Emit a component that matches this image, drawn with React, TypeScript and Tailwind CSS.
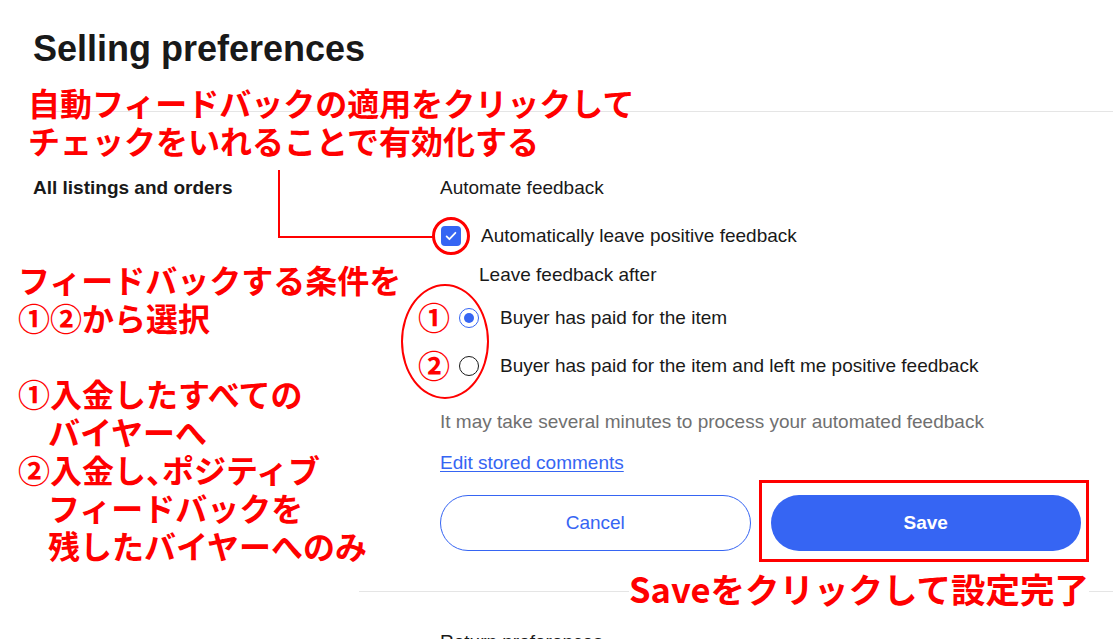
function CheckBox() {
  return (
    <span className="ml-px flex h-5 w-5 shrink-0 items-center justify-center rounded-[4px] bg-[#3665f3]">
      <svg viewBox="0 0 20 20" className="h-4 w-4" fill="none">
        <path d="M4.5 10.5l3.5 3.5 7.5-8" stroke="white" strokeWidth="2.2" strokeLinecap="round" strokeLinejoin="round" />
      </svg>
    </span>
  )
}

function Radio({ checked }: { checked?: boolean }) {
  return (
    <span
      className={
        checked
          ? 'flex h-5 w-5 shrink-0 items-center justify-center rounded-full border-[1.5px] border-[#3665f3]'
          : 'flex h-5 w-5 shrink-0 items-center justify-center rounded-full border-[1.5px] border-[#191919]'
      }
    >
      {checked && <span className="h-[10px] w-[10px] rounded-full bg-[#3665f3]" />}
    </span>
  )
}

const note = "absolute font-['Noto_Sans_CJK_JP',sans-serif] text-[32px] font-bold leading-[38px] text-[#ff0000]"

export default function App() {
  return (
    <div className="relative h-[639px] w-full overflow-hidden bg-white font-['Liberation_Sans',Arial,sans-serif] text-[#191919]">
      <h1 className="pl-[33px] pt-[27px] text-[36px] font-bold leading-[44px]">Selling preferences</h1>
      <div className="ml-[33px] mt-[40px] h-px bg-[#e5e5e5]" />

      <section className="mt-[64px] flex pl-[33px] pr-[32px]">
        <h2 className="w-[407px] shrink-0 text-[19px] font-bold leading-6">All listings and orders</h2>
        <div className="flex-1 text-[19px] leading-6">
          <p>Automate feedback</p>
          <label className="mt-6 flex h-6 items-center gap-5">
            <CheckBox />
            <span>Automatically leave positive feedback</span>
          </label>
          <p className="mt-[15px] pl-[39px]">Leave feedback after</p>
          <label className="mt-[19px] flex h-6 items-center gap-[21px] pl-[19px]">
            <Radio checked />
            <span>Buyer has paid for the item</span>
          </label>
          <label className="mt-6 flex h-6 items-center gap-[21px] pl-[19px]">
            <Radio />
            <span>Buyer has paid for the item and left me positive feedback</span>
          </label>
          <p className="mt-8 text-[#707070]">It may take several minutes to process your automated feedback</p>
          <a href="#" className="mt-[17px] block w-fit text-[#3665f3] underline underline-offset-2">
            Edit stored comments
          </a>
          <div className="mt-5 grid grid-cols-2 gap-5">
            <button
              type="button"
              className="h-14 rounded-full border border-[#3665f3] bg-white text-[19px] text-[#3665f3]"
            >
              Cancel
            </button>
            <button type="button" className="h-14 rounded-full bg-[#3665f3] text-[19px] font-bold text-white">
              Save
            </button>
          </div>
        </div>
      </section>

      <div className="ml-[359px] mt-10 h-px bg-[#e5e5e5]" />
      <p className="ml-[440px] mt-[38px] text-[19px] leading-6">Return preferences</p>

      {/* annotations */}
      <div className={`${note} left-[28px] top-[83px]`}>
        <div>自動フィードバックの適用をクリックして</div>
        <div>チェックをいれることで有効化する</div>
      </div>
      <div className="absolute left-[278px] top-[170px] h-[68px] w-[156px] border-b-2 border-l-2 border-[#ff0000]" />
      <div className="absolute left-[432px] top-[217px] h-[38px] w-[38px] rounded-full border-[3px] border-[#ff0000]" />

      <div className={`${note} left-[18px] top-[260px]`}>
        <div>フィードバックする条件を</div>
        <div>①②から選択</div>
        <div className="h-[38px]" />
        <div>①入金したすべての</div>
        <div className="pl-[30px]">バイヤーへ</div>
        <div>
          ②入金し<span className="inline-block w-[16px]">、</span>ポジティブ
        </div>
        <div className="pl-[30px]">フィードバックを</div>
        <div className="pl-[30px]">残したバイヤーへのみ</div>
      </div>

      <div className="absolute left-[401px] top-[284px] h-[115px] w-[88px] rounded-[50%] border-2 border-[#ff0000]" />
      <div className={`${note} left-[418px] top-[297px]`}>①</div>
      <div className={`${note} left-[418px] top-[345px]`}>②</div>

      <div className="absolute left-[759px] top-[480px] h-[82px] w-[330px] border-[3px] border-[#ff0000]" />
      <div className={`${note} left-[629px] top-[569px] bg-white text-[34.5px]`}>Saveをクリックして設定完了</div>
    </div>
  )
}
